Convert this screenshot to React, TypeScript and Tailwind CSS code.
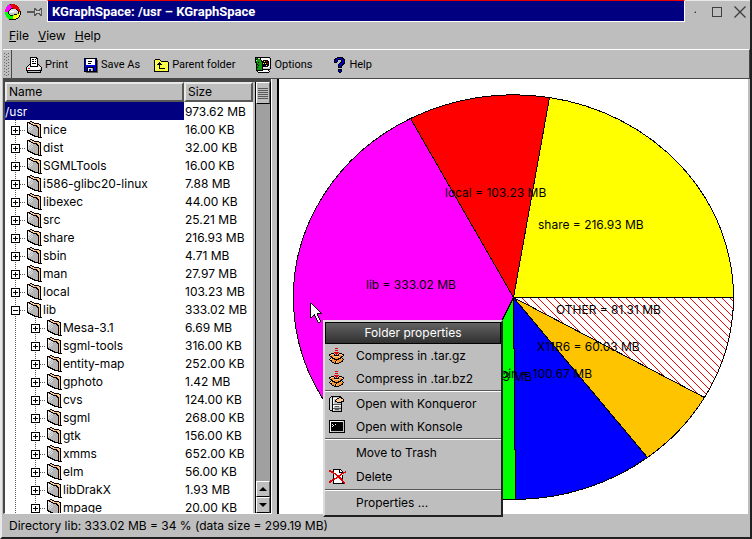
import type { ReactNode } from "react";

const palette: Record<string, string> = {
  K: "#000000", W: "#ffffff", G: "#a0a0a0", D: "#585858", L: "#dcdcdc", O: "#ffc890",
  B: "#0000d0", N: "#000080", Y: "#ffff00", y: "#ffff90", R: "#e00000", E: "#00a000",
  M: "#ff00ff", o: "#ff9830", S: "#c3c3c3", g: "#00ff00", H: "#b4b4b4",
};

function Pixels({ rows }: { rows: string[] }) {
  const width = Math.max(...rows.map((r) => r.length));
  const rects: ReactNode[] = [];
  rows.forEach((row, y) => {
    let x = 0;
    while (x < row.length) {
      let end = x + 1;
      while (end < row.length && row[end] === row[x]) end++;
      if (palette[row[x]]) {
        rects.push(<rect key={`${x}-${y}`} x={x} y={y} width={end - x} height={1} fill={palette[row[x]]} />);
      }
      x = end;
    }
  });
  return (
    <svg width={width} height={rows.length} viewBox={`0 0 ${width} ${rows.length}`} shapeRendering="crispEdges" className="block shrink-0" aria-hidden="true">
      {rects}
    </svg>
  );
}

const folder = [
  "...KK...........",
  "KKKOOKK.........",
  "KLKKOOOKKKKK....",
  "KWLLKKOOOOOOKK..",
  "KLWLLHKKKKOOOK..",
  "KWLLHLHHHKKOOK..",
  "KLLHLHHHHHKKOK..",
  "KLHLHLHHHHHKOK..",
  "KLLHLHHHHHHKOK..",
  "KLHLHHHHHHHKOK..",
  "KHHHHHHHHHHKOK..",
  "KKHHHHHHHHHKOK..",
  ".KKKHHHHHHHKOK..",
  "...KKKHHHHHKOK..",
  ".....KKKHHHKOK..",
  ".......KKKKKOK..",
  "...........KKKK.",
];
const printer = [
  "....KKKKKKK.....",
  "....KWWWWWKK....",
  "....KWKKWKWK....",
  "....KWWWWWWK....",
  "....KWKKWKWK....",
  "....KWWWWWWK....",
  "....KWKKKKWK....",
  "...KKWWWWWWKK...",
  "..KLKWWWWWWKLK..",
  ".KLLKKKKKKKKLLK.",
  "KWWWWWWWWWWWWWWK",
  "KWRRWWWWWWWWWWSK",
  "KWWWWWWWWWWWWSSK",
  "KKKKKKKKKKKKKKKK",
  ".KSSSSSSSSSSSSK.",
  ".KKKKKKKKKKKKKK.",
];
const floppy = [
  "KKKKKKKKKKKKK.",
  "KBLWWWWWWWWBK.",
  "KBWWWWWWWWWBKD",
  "KBWWKKKKWWWBKD",
  "KBWWWWWWWWWBKD",
  "KBWWKKKWWWWBKD",
  "KBWWWWWWWWWBKD",
  "KBBBBBBBBBBBKD",
  "KBBBBBBBBBBBKD",
  "KBBKKKKKKKBBKD",
  "KBBKWWLLGKBBKD",
  "KBBKWBBLGKBBKD",
  "KBBKWBBLGKBBKD",
  "KKKKKKKKKKKKKD",
  "..DDDDDDDDDDDD",
];
const parent = [
  ".KKKKK.........",
  "KYyYyYK........",
  "KyYyYyYKKKKKKK.",
  "KYyYyKyYyYyYyYK",
  "KyYyKKKyYyYyYyK",
  "KYyKKKKKYyYyYyK",
  "KyYyYKyYyYyYyYK",
  "KYyYyKYyYyYyYyK",
  "KyYyYKyYyYyYyYK",
  "KYyYyKKKKKKyYyK",
  "KyYyYyYyYyYyYyK",
  "KYyYyYyYyYyYyYK",
  "KKKKKKKKKKKKKKK",
];
const options = [
  "KKKKKKKKKKKKKKK.",
  "KEKLLKWWWWWWWWSK",
  "KKEEEKWWWWWWWWWK",
  "KLEEEEKWKKKKKWWK",
  "KEEDEEKKKYKRKKWK",
  "KKEKEEEKKKKKKKWK",
  ".KEEEDEKYKYKRKWK",
  ".KKDEEEKKKKKKKWK",
  ".KEKEEEKKBKYKKWK",
  ".KEEEDEKKKKKKWWK",
  ".KKEEEEKWWWWWWSK",
  ".KEDEDEKSSSSSSSK",
  ".KEEEEEKKKKKKKK.",
  ".KKKKKKKWWWWWK..",
  "..KWWWWWWWWWWWK.",
  "...KKKKKKKKKKK..",
];
const help = [
  "...KKKKKK...",
  ".KKBBBBBKK..",
  "KKBBKKKBBKK.",
  "KBBK...KBBK.",
  "KBBK...KBBK.",
  "KKK...KKBBK.",
  ".....KBBBKK.",
  "....KBBBKK..",
  "....KBBKK...",
  "....KBBK....",
  "....KKKK....",
  "............",
  "....KKKK....",
  "....KBBK....",
  "....KBBK....",
  ".....KK.....",
];
const logo = [
  "....MKRRRR......",
  "..gMMMRRRRRR....",
  "..MMMMRRRRRRR...",
  ".MMMMMMRRRRRRR..",
  ".MMMMMKKRRRRRR..",
  "MMMMMKLLLLLKRRR.",
  "MMMMKLLLLLLLKRR.",
  "MMMKLWWWWLLLLKRK",
  "gggKLLLLLLLSSKYK",
  "gggKSSSSSSSSSKYK",
  "ggggKSSSSKKKYYYK",
  ".ggggKKKgYYYYYK.",
  ".gggggggYYYYYYK.",
  "..ggggggYYYYYK..",
  "...gggggYYYKK...",
  "....KKKKKKK.....",
];
const pin = [
  ".......DD....DD",
  ".......DDD..DDD",
  ".......DSDDDDSD",
  "DDDDDDDDSLLLSSD",
  "DDDDDDDDSSSSSSD",
  ".......DSDDDDSD",
  ".......DDD..DDD",
  ".......DD....DD",
];
const archive = [
  "......RRR.......",
  "................",
  "......RRR.......",
  "................",
  ".....RRRRR......",
  "..KKK.RRR.KKK...",
  "KKOOOK.R.KOOOKK.",
  "KOoooKKKKKoooOK.",
  ".KKooOOOOOooKK..",
  "..KKOoooooOKK...",
  ".KOKKKoooKKKOK..",
  "KOOooKKKKKooooK.",
  ".KKooooKoooooK..",
  "..KoooKOooooKK..",
  "...KKoKOooKK....",
  ".....KKKKK......",
];
const cabinet = [
  "..KKKKKKKKKK....",
  ".KLKSSSSSSKKK...",
  "KLLKWWWWKKOOKK..",
  "KLLKWSSKOOOOOOK.",
  "KLLKWSKOOOOOOOK.",
  "KLLKWSKKOOOOKKK.",
  "KLLKWSSSKKKKK...",
  "KLLKWSSSSSSSK...",
  "KLLKDDDDDDDDK...",
  "KLLKWWWWWWWWK...",
  "KLLKWSDDDDSSK...",
  "KLLKWSSSSSSSK...",
  "KLLKDDDDDDDDK...",
  "KLLKWSDDDDSSK...",
  ".KKKWSSSSSSSK...",
  "...KKKKKKKKKK...",
];
const terminal = [
  "KKKKKKKKKKKKKKKK",
  "KWWWWWWWWWWWWWSK",
  "KWKKKKKKKKKKKKSK",
  "KWKKKKKKKKKKKKSK",
  "KWKWKKWKKKKKKKSK",
  "KWKKWKKKKKKKKKSK",
  "KWKWKKKKKKKKKKSK",
  "KWKKKKKKKKKKKKSK",
  "KWKKKKKKKKKKKKSK",
  "KWKKKKKKKKKKKKSK",
  "KWKKKKKKKKKKKKSK",
  "KWSSSSSSSSSSSSSK",
  "KKKKKKKKKKKKKKKK",
];
const remove = [
  "....KKKKKKKK.....",
  "RR..KWWWWWKWK....",
  "RRRRKWWWWWKWWK..R",
  "..RRRWWWWWKKKKRRR",
  "....RRRWWWWWRRR..",
  "....KWRRWWWRRW...",
  "....KWWRRRRRWK...",
  "....KWWWRRRWWK...",
  "....KWWRRRRRWK...",
  "....KRRRWWRRRK...",
  "...RRRWWWWWRRR...",
  ".RRRKWWWWWWWRR...",
  "RRR.KWWWWWWWWRR..",
  "RR..KWWWWWWWWKRR.",
  "....KKKKKKKKKKKR.",
];
const pointer = [
  "KK..........",
  "KWK.........",
  "KWWK........",
  "KWWWK.......",
  "KWWWWK......",
  "KWWWWWK.....",
  "KWWWWWWK....",
  "KWWWWWWWK...",
  "KWWWWWWWWK..",
  "KWWWWWWWWWK.",
  "KWWWWWWKKKKK",
  "KWWWKWWK....",
  "KWWKKWWK....",
  "KWK..KWWK...",
  "KK...KWWK...",
  "......KWWK..",
  "......KWWK..",
  ".......KWWK.",
  ".......KWWK.",
  "........KK..",
];

type Entry = { name: string; size: string; depth: number; open?: boolean };
const entries: Entry[] = [
  { name: "/usr", size: "973.62 MB", depth: 0 },
  { name: "nice", size: "16.00 KB", depth: 1 },
  { name: "dist", size: "32.00 KB", depth: 1 },
  { name: "SGMLTools", size: "16.00 KB", depth: 1 },
  { name: "i586-glibc20-linux", size: "7.88 MB", depth: 1 },
  { name: "libexec", size: "44.00 KB", depth: 1 },
  { name: "src", size: "25.21 MB", depth: 1 },
  { name: "share", size: "216.93 MB", depth: 1 },
  { name: "sbin", size: "4.71 MB", depth: 1 },
  { name: "man", size: "27.97 MB", depth: 1 },
  { name: "local", size: "103.23 MB", depth: 1 },
  { name: "lib", size: "333.02 MB", depth: 1, open: true },
  { name: "Mesa-3.1", size: "6.69 MB", depth: 2 },
  { name: "sgml-tools", size: "316.00 KB", depth: 2 },
  { name: "entity-map", size: "252.00 KB", depth: 2 },
  { name: "gphoto", size: "1.42 MB", depth: 2 },
  { name: "cvs", size: "124.00 KB", depth: 2 },
  { name: "sgml", size: "268.00 KB", depth: 2 },
  { name: "gtk", size: "156.00 KB", depth: 2 },
  { name: "xmms", size: "652.00 KB", depth: 2 },
  { name: "elm", size: "56.00 KB", depth: 2 },
  { name: "libDrakX", size: "1.93 MB", depth: 2 },
  { name: "mpage", size: "20.00 KB", depth: 2 },
];

function Branch({ depth, open }: { depth: number; open?: boolean }) {
  const x = depth === 2 ? 20 : 0;
  return (
    <svg width={x + 22} height="18" className="block shrink-0" shapeRendering="crispEdges" aria-hidden="true">
      <g stroke="#585858" strokeDasharray="1 1">
        {depth === 2 && <path d="M10.5 0v18" />}
        <path d={`M${x + 10.5} 0v18M${x + 15} 10.5h5`} />
      </g>
      <rect x={x + 6.5} y="6.5" width="8" height="8" fill="#fff" stroke="#000" />
      <path d={`M${x + 8} 10.5h5`} stroke="#000" />
      {!open && <path d={`M${x + 10.5} 8v5`} stroke="#000" />}
    </svg>
  );
}

function Tree() {
  return (
    <div className="min-w-0 flex-1 overflow-hidden bg-white">
      <table className="w-full table-fixed border-separate border-spacing-0 text-left">
        <thead>
          <tr className="h-5 bg-[#bebebe] leading-4">
            <th className="border-2 border-t-[#e8e8e8] border-l-[#e8e8e8] border-r-[#585858] border-b-[#585858] p-0 pl-0.5 font-normal">Name</th>
            <th className="w-[69px] border-2 border-t-[#e8e8e8] border-l-[#e8e8e8] border-r-[#585858] border-b-[#585858] p-0 pl-0.5 font-normal">Size</th>
          </tr>
        </thead>
        <tbody>
          {entries.map((e) => (
            <tr key={e.name} className="h-[18px] leading-5">
              <td className={e.depth === 0 ? "bg-[#000080] p-0 text-white" : "p-0"}>
                <div className="flex h-[18px] items-start">
                  {e.depth > 0 && <Branch depth={e.depth} open={e.open} />}
                  {e.depth > 0 && <div className="pt-px"><Pixels rows={folder} /></div>}
                  <span>{e.name}</span>
                </div>
              </td>
              <td className="p-0 pl-px whitespace-nowrap">
                <div className="h-[18px]">{e.size}</div>
              </td>
            </tr>
          ))}
        </tbody>
      </table>
    </div>
  );
}

function Scrollbar() {
  const btn = "flex h-4 shrink-0 items-center justify-center border border-t-white border-l-white border-r-[#585858] border-b-black bg-[#bebebe]";
  return (
    <div className="flex w-4 shrink-0 flex-col border-x border-black bg-[#a0a0a0]">
      <button aria-label="Scroll thumb" className="flex h-[22px] shrink-0 items-center justify-center border border-t-white border-l-white border-r-[#585858] border-b-black bg-[#bebebe]">
        <svg width="10" height="11" shapeRendering="crispEdges"><path d="M0 .5h10M0 2.5h10M0 4.5h10M0 6.5h10M0 8.5h10M0 10.5h10" stroke="#585858" /></svg>
      </button>
      <div className="flex-1" />
      <button aria-label="Scroll up" className={btn}><svg width="8" height="4"><path d="M0 4l4-4 4 4z" /></svg></button>
      <button aria-label="Scroll down" className={btn}><svg width="8" height="4"><path d="M0 0l4 4 4-4z" /></svg></button>
    </div>
  );
}

const arc = (x1: number, y1: number, x2: number, y2: number) =>
  `M513.5 297.5L${x1} ${y1}A220 202.5 0 0 0 ${x2} ${y2}Z`;
const slices = [
  { d: arc(733.5, 297.5, 549.5, 97.5), fill: "#ffff00" },
  { d: arc(549.5, 97.5, 410.5, 118.5), fill: "#ff0000" },
  { d: arc(410.5, 118.5, 421.5, 481.5), fill: "#ff00ff" },
  { d: arc(421.5, 481.5, 515.5, 499.5), fill: "#00ff00" },
  { d: arc(515.5, 499.5, 647.5, 457.5), fill: "#0000ff" },
  { d: arc(647.5, 457.5, 704.5, 397.5), fill: "#ffc400" },
  { d: arc(704.5, 397.5, 733.5, 297.5), fill: "url(#hatch)" },
];

function Chart() {
  return (
    <svg viewBox="279 79 469 435" className="block h-full w-full text-xs" role="img" aria-label="Disk usage of /usr">
      <defs>
        <pattern id="hatch" width="8" height="8" patternUnits="userSpaceOnUse">
          <rect width="8" height="8" fill="#fff" />
          <path d="M-1-1L9 9M-1 7L1 9M7-1L9 1" stroke="#ff0000" />
        </pattern>
      </defs>
      <g stroke="#000" shapeRendering="crispEdges">
        {slices.map((s) => <path key={s.d} d={s.d} fill={s.fill} />)}
      </g>
      <text x="366" y="289">lib = 333.02 MB</text>
      <text x="445" y="197">local = 103.23 MB</text>
      <text x="538" y="229">share = 216.93 MB</text>
      <text x="556" y="314">OTHER = 81.31 MB</text>
      <text x="537" y="351">X11R6 = 60.03 MB</text>
      <text x="592" y="378" textAnchor="end">bin = 100.67 MB</text>
      <text x="532" y="381" textAnchor="end">doc = 78.43 MB</text>
    </svg>
  );
}

function Item({ icon, children }: { icon?: string[]; children: ReactNode }) {
  return (
    <button role="menuitem" className="flex h-[23px] w-full items-center text-left">
      <span className="flex w-[31px] shrink-0 pl-1">{icon && <Pixels rows={icon} />}</span>
      {children}
    </button>
  );
}

const Divider = () => <div role="separator" className="h-0.5 border-t border-b border-t-[#585858] border-b-white" />;

function ContextMenu() {
  return (
    <div role="menu" className="absolute top-[241px] left-[44px] w-[180px] border-2 border-t-[#dcdcdc] border-l-[#dcdcdc] border-r-[#202020] border-b-[#202020] bg-[#bebebe]">
      <div className="h-[22px] border border-black bg-linear-to-b from-[#646464] to-[#303030] text-center leading-5 text-white">Folder properties</div>
      <Item icon={archive}>Compress in .tar.gz</Item>
      <Item icon={archive}>Compress in .tar.bz2</Item>
      <Divider />
      <Item icon={cabinet}>Open with Konqueror</Item>
      <Item icon={terminal}>Open with Konsole</Item>
      <Divider />
      <div className="pt-px"><Item>Move to Trash</Item></div>
      <div className="py-px"><Item icon={remove}>Delete</Item></div>
      <Divider />
      <div className="pb-px"><Item>Properties ...</Item></div>
    </div>
  );
}

function Tool({ icon, label }: { icon: string[]; label: string }) {
  return (
    <button className="flex items-center gap-[3px]">
      <Pixels rows={icon} />
      {label}
    </button>
  );
}

export default function App() {
  return (
    <div className="flex h-screen flex-col border-r-2 border-b-2 border-l-2 border-r-[#202020] border-b-[#202020] border-l-[#e8e8e8] bg-[#bebebe] font-['Inter',sans-serif] text-xs text-black">
      <header className="flex h-[22px] shrink-0">
        <div className="flex w-[45px] shrink-0 items-center gap-1.5 border-t border-[#e8e8e8] pl-[3px]">
          <Pixels rows={logo} />
          <Pixels rows={pin} />
        </div>
        <h1 className="flex-1 border-t border-r border-b border-l border-t-[#e00000] border-r-white border-b-white border-l-white bg-[#000080] pl-1 font-['Roboto',sans-serif] text-[13px] leading-[21px] font-bold text-white">
          KGraphSpace: /usr – KGraphSpace
        </h1>
        <div className="flex w-[65px] shrink-0 items-center justify-end gap-3 border-t border-[#e8e8e8] pr-1 text-[#404040]">
          <button aria-label="Minimize"><svg width="6" height="12"><path d="M0 7h2v-2z" fill="currentColor" /></svg></button>
          <button aria-label="Maximize"><svg width="10" height="10" className="block"><rect x=".5" y=".5" width="9" height="9" fill="none" stroke="currentColor" /></svg></button>
          <button aria-label="Close"><svg width="12" height="12" className="block"><path d="M.5.5l11 11M11.5.5l-11 11" stroke="currentColor" strokeWidth="1.4" /></svg></button>
        </div>
      </header>
      <nav className="flex h-[27px] shrink-0 items-center gap-[9px] pl-[7px]">
        <button><u>F</u>ile</button>
        <button><u>V</u>iew</button>
        <button><u>H</u>elp</button>
      </nav>
      <div role="toolbar" className="ml-px flex h-[30px] shrink-0 items-center border-t border-r border-b border-t-white border-r-[#484848] border-b-[#484848] font-['Roboto',sans-serif] text-[11px]">
        <svg width="9" height="28" className="mr-[14px] shrink-0" shapeRendering="crispEdges" aria-hidden="true">
          <path d="M1.5 3v24M5.5 3v24" stroke="#686868" strokeDasharray="1 2" />
          <path d="M3.5 4v24" stroke="#686868" strokeDasharray="1 2" />
          <path d="M8.5 0v28" stroke="#484848" />
        </svg>
        <div className="flex items-center pt-0.5">
          <Tool icon={printer} label="Print" />
          <span className="w-4" />
          <Tool icon={floppy} label="Save As" />
          <span className="w-3.5" />
          <Tool icon={parent} label="Parent folder" />
          <span className="w-5" />
          <Tool icon={options} label="Options" />
          <span className="w-[22px]" />
          <Tool icon={help} label="Help" />
        </div>
      </div>
      <main className="flex min-h-0 flex-1">
        <section className="ml-px flex w-[268px] shrink-0 border-t-[3px] border-b border-l-2 border-[#484848] border-b-white">
          <Tree />
          <span className="w-0.5 bg-[#bebebe]" />
          <Scrollbar />
        </section>
        <div className="w-2 shrink-0 border-r-2 border-l border-r-black border-l-white bg-[#bebebe]" />
        <section className="relative min-w-0 flex-1 bg-white">
          <Chart />
          <div className="absolute top-[224px] left-[31px]"><Pixels rows={pointer} /></div>
          <ContextMenu />
        </section>
        <div className="w-0.5 bg-[#bebebe]" />
      </main>
      <footer className="h-[23px] shrink-0 pl-[7px] leading-[24px]">Directory lib: 333.02 MB = 34 % (data size = 299.19 MB)</footer>
    </div>
  );
}
